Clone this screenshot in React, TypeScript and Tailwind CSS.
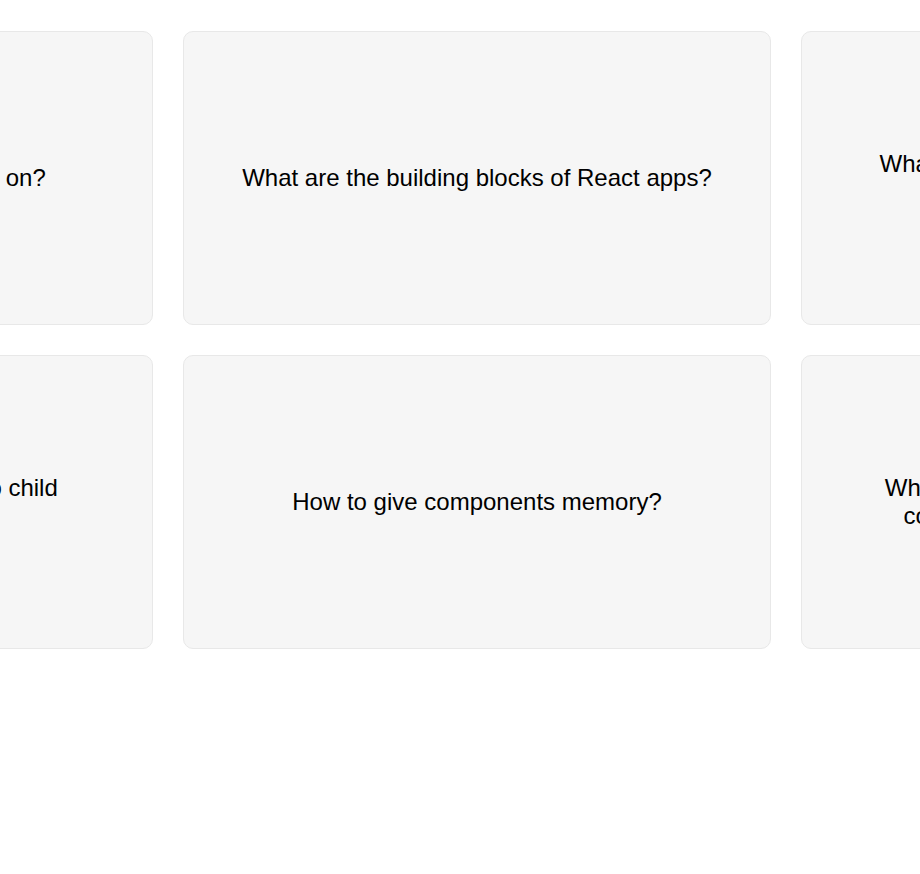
const rows: string[][] = [
  [
    "What language is React based on?",
    "What are the building blocks of React apps?",
    "What is the syntax extension used to put markup in JavaScript?",
  ],
  [
    "How to pass data from parent to child components?",
    "How to give components memory?",
    "What happens when the state of a child component changes in React apps?",
  ],
];

const Card = ({ text }: { text: string }) => (
  <div className="w-[588px] h-[294px] shrink-0 flex items-center justify-center px-10 text-center rounded-[10px] border border-[#e8e8e8] bg-[#f6f6f6]">
    <p className="text-[24px] leading-[28px] text-black">{text}</p>
  </div>
);

export default function App() {
  return (
    <div
      className="min-h-screen w-full overflow-hidden bg-white pt-[31px]"
      style={{ fontFamily: '"Liberation Sans", Arial, sans-serif' }}
    >
      <div className="flex flex-col gap-[30px]">
        {rows.map((row, i) => (
          <div key={i} className="flex flex-row gap-[30px] ml-[-435px]">
            {row.map((t) => (
              <Card key={t} text={t} />
            ))}
          </div>
        ))}
      </div>
    </div>
  );
}
